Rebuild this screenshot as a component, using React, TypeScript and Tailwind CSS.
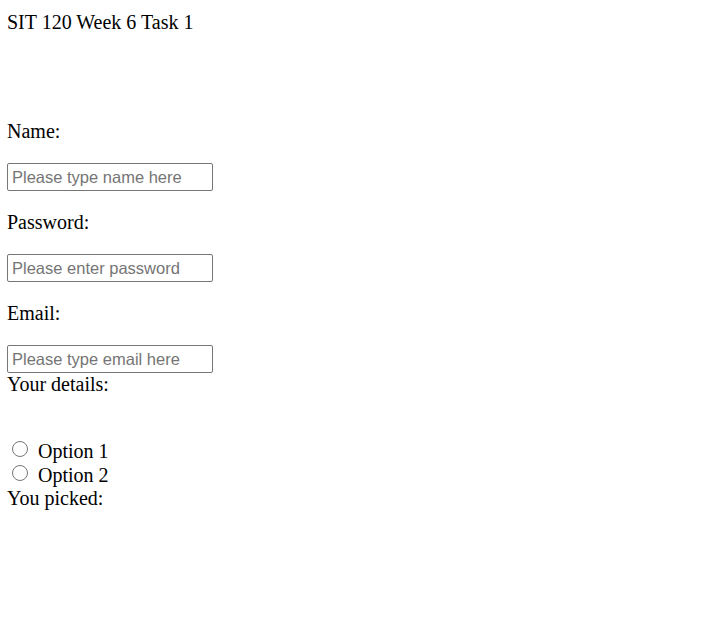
import { useState } from "react";

export default function App() {
  const [form, setForm] = useState({ name: "", password: "", email: "" });
  const [picked, setPicked] = useState("");

  const inputCls =
    "block w-[206px] h-[28px] border border-[#767676] rounded-[2px] px-[4px] text-[16.5px] text-black placeholder:text-[#757575] outline-none bg-white";

  return (
    <div
      className="min-h-screen bg-white text-black pl-[7px] pt-[11px] text-[20px] leading-[23px]"
      style={{ fontFamily: '"Liberation Serif", "Times New Roman", serif' }}
    >
      <div>SIT 120 Week 6 Task 1</div>

      <div className="h-[86px]" />

      {/* Form fields */}
      <p>Name:</p>
      <input
        type="text"
        placeholder="Please type name here"
        value={form.name}
        onChange={(e) => setForm({ ...form, name: e.target.value })}
        className={`${inputCls} mt-[20px]`}
        style={{ fontFamily: '"Liberation Sans", Arial, sans-serif' }}
      />
      <p className="mt-[20px]">Password:</p>
      <input
        type="password"
        placeholder="Please enter password"
        value={form.password}
        onChange={(e) => setForm({ ...form, password: e.target.value })}
        className={`${inputCls} mt-[20px]`}
        style={{ fontFamily: '"Liberation Sans", Arial, sans-serif' }}
      />
      <p className="mt-[20px]">Email:</p>
      <input
        type="email"
        placeholder="Please type email here"
        value={form.email}
        onChange={(e) => setForm({ ...form, email: e.target.value })}
        className={`${inputCls} mt-[20px]`}
        style={{ fontFamily: '"Liberation Sans", Arial, sans-serif' }}
      />
      <div>Your details: {form.name}</div>

      <div className="h-[43px]" />

      {/* Radio options */}
      {["Option 1", "Option 2"].map((opt) => (
        <label key={opt} className="flex items-center h-[24px]">
          <input
            type="radio"
            name="opt"
            value={opt}
            checked={picked === opt}
            onChange={() => setPicked(opt)}
            className="w-[16px] h-[16px] ml-[5px] mr-[10px] -mt-[4px] accent-[#767676]"
          />
          {opt}
        </label>
      ))}
      <div>You picked: {picked}</div>
    </div>
  );
}
